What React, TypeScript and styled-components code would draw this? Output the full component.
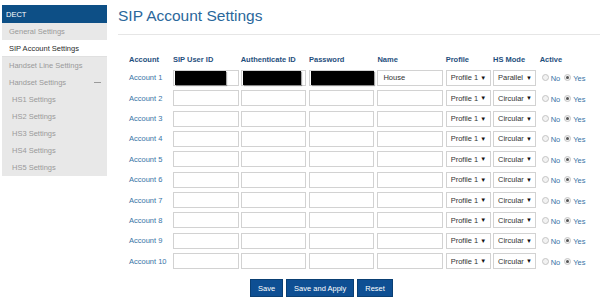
import React from "react";
import styled, { createGlobalStyle } from "styled-components";

const Global = createGlobalStyle`
  html, body { margin: 0; padding: 0; background: #fff; }
  body { font-family: "Liberation Sans", Arial, sans-serif; }
  * { box-sizing: border-box; }
`;

const Page = styled.div`
  display: flex;
  align-items: flex-start;
  width: 600px;
  height: 301px;
  overflow: hidden;
`;

const Sidebar = styled.nav`
  margin: 5px 0 0 2px;
  width: 105px;
  background: #e8e8e8;
  display: flex;
  flex-direction: column;
`;

const SideHeader = styled.div`
  height: 18px;
  background: #0d4f86;
  color: #fff;
  font-size: 7.5px;
  display: flex;
  align-items: center;
  padding-left: 4px;
`;

const SideItem = styled.div<{ $active?: boolean; $sub?: boolean }>`
  height: 17px;
  display: flex;
  align-items: center;
  justify-content: space-between;
  padding: 0 6px 0 ${(p) => (p.$sub ? 10 : 7)}px;
  font-size: 7.5px;
  color: ${(p) => (p.$active ? "#2b2b2b" : "#9a9a9a")};
  background: ${(p) => (p.$active ? "#fff" : "transparent")};
  border-bottom: ${(p) => (p.$active ? "1px solid #e0e0e0" : "none")};
`;

const Dash = styled.span`
  width: 7px;
  height: 1px;
  background: #9a9a9a;
`;

const Main = styled.main`
  flex: 1;
  margin-left: 11px;
  display: flex;
  flex-direction: column;
`;

const Title = styled.h1`
  margin: 0;
  padding-top: 6px;
  height: 35px;
  font-size: 15.5px;
  line-height: 20px;
  font-weight: 400;
  color: #2a679b;
  border-bottom: 1px solid #e6e6e6;
`;

const Grid = styled.div`
  margin: 18.5px 0 0 11px;
  display: grid;
  grid-template-columns: 44px 67.7px 68.3px 68.4px 68.3px 47.3px 46.7px auto;
  row-gap: 4.37px;
  align-items: center;
`;

const HeadCell = styled.div`
  font-size: 7.5px;
  font-weight: 700;
  color: #1f4f7d;
  height: 12px;
  line-height: 12px;
`;

const Label = styled.div`
  font-size: 7.5px;
  color: #3874a6;
`;

const TextBox = styled.div`
  position: relative;
  width: 65.5px;
  height: 16px;
  border: 1px solid #d2d2d2;
  background: #fff;
  font-size: 7.5px;
  color: #333;
  display: flex;
  align-items: center;
  padding-left: 5px;
`;

const Redact = styled.div<{ $w: number }>`
  position: absolute;
  left: 1px;
  top: 0.5px;
  height: 14px;
  width: ${(p) => p.$w}px;
  background: #000;
  box-shadow: 1px 1px 1px rgba(0, 0, 0, 0.35);
`;

const Select = styled.div<{ $w: number }>`
  width: ${(p) => p.$w}px;
  height: 16px;
  border: 1px solid #d2d2d2;
  background: #fff;
  font-size: 7.5px;
  color: #333;
  display: flex;
  align-items: center;
  justify-content: space-between;
  padding: 0 3.5px 0 4px;
`;

const Arrow = styled.span`
  font-size: 6px;
  color: #111;
`;

const Active = styled.div`
  display: flex;
  align-items: center;
  font-size: 7.5px;
  color: #3874a6;
  padding-left: 2px;
`;

const Radio = styled.span<{ $on?: boolean }>`
  position: relative;
  width: 7px;
  height: 7px;
  border-radius: 50%;
  border: 1px solid #c4c4c4;
  background: #f2f2f2;
  margin-right: 2px;
  &::after {
    content: "";
    display: ${(p) => (p.$on ? "block" : "none")};
    position: absolute;
    left: 1px;
    top: 1px;
    width: 3px;
    height: 3px;
    border-radius: 50%;
    background: #555;
  }
`;

const Opt = styled.span`
  margin-right: 4px;
  padding-top: 2px;
`;

const Buttons = styled.div`
  display: flex;
  gap: 3px;
  margin: 10px 0 0 132px;
`;

const Button = styled.button`
  height: 18px;
  padding: 0 7px;
  border: 1px solid #0a3f73;
  background: #0e4f93;
  color: #fff;
  font-family: "Liberation Sans", Arial, sans-serif;
  font-size: 7.5px;
  cursor: pointer;
`;

const accounts = Array.from({ length: 10 }, (_, i) => i + 1);

export default function App() {
  return (
    <>
      <Global />
      <Page>
        <Sidebar>
          <SideHeader>DECT</SideHeader>
          <SideItem>General Settings</SideItem>
          <SideItem $active>SIP Account Settings</SideItem>
          <SideItem>Handset Line Settings</SideItem>
          <SideItem>
            Handset Settings <Dash />
          </SideItem>
          {[1, 2, 3, 4, 5].map((n) => (
            <SideItem key={n} $sub>
              HS{n} Settings
            </SideItem>
          ))}
        </Sidebar>
        <Main>
          <Title>SIP Account Settings</Title>
          <Grid>
            <HeadCell>Account</HeadCell>
            <HeadCell>SIP User ID</HeadCell>
            <HeadCell>Authenticate ID</HeadCell>
            <HeadCell>Password</HeadCell>
            <HeadCell>Name</HeadCell>
            <HeadCell>Profile</HeadCell>
            <HeadCell>HS Mode</HeadCell>
            <HeadCell>Active</HeadCell>
            {accounts.map((n) => (
              <React.Fragment key={n}>
                <Label>Account {n}</Label>
                <TextBox>{n === 1 && <Redact $w={51} />}</TextBox>
                <TextBox>{n === 1 && <Redact $w={58} />}</TextBox>
                <TextBox>{n === 1 && <Redact $w={63.5} />}</TextBox>
                <TextBox>{n === 1 ? "House" : ""}</TextBox>
                <Select $w={45}>
                  Profile 1 <Arrow>▼</Arrow>
                </Select>
                <Select $w={43.5}>
                  {n === 1 ? "Parallel" : "Circular"} <Arrow>▼</Arrow>
                </Select>
                <Active>
                  <Radio />
                  <Opt>No</Opt>
                  <Radio $on />
                  <Opt>Yes</Opt>
                </Active>
              </React.Fragment>
            ))}
          </Grid>
          <Buttons>
            <Button>Save</Button>
            <Button>Save and Apply</Button>
            <Button>Reset</Button>
          </Buttons>
        </Main>
      </Page>
    </>
  );
}
